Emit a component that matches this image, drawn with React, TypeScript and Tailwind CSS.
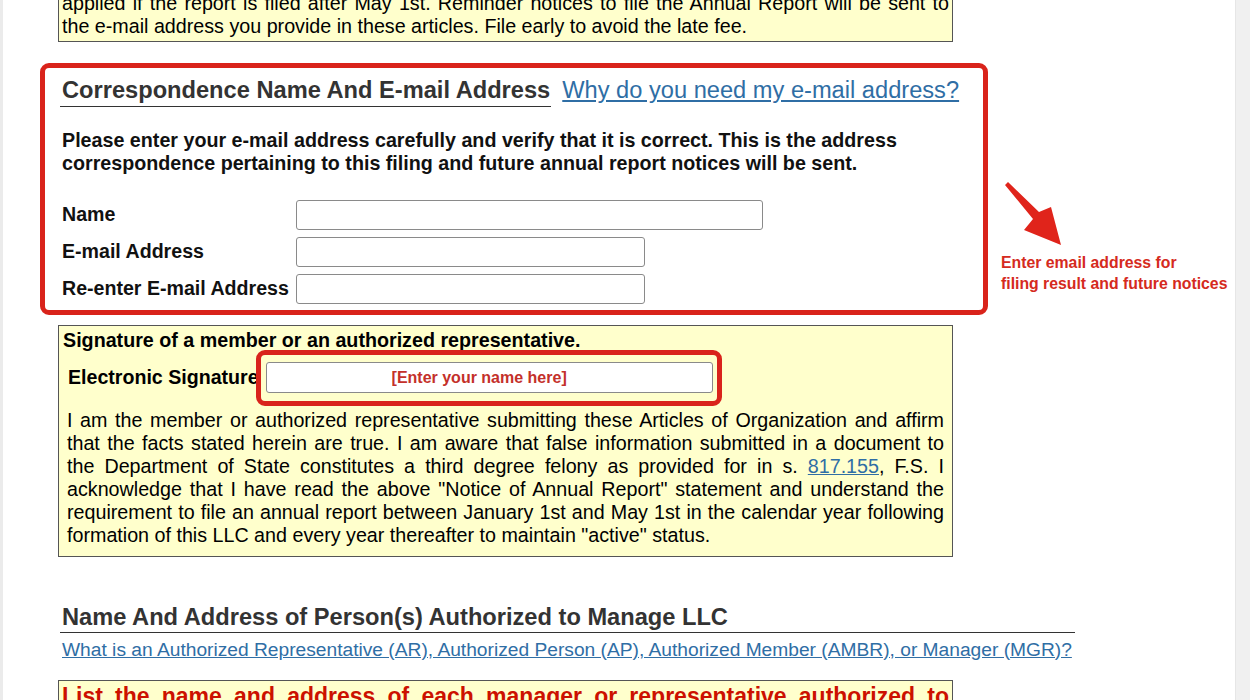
import React from "react";

function JLine({ children, last }: { children: React.ReactNode; last?: boolean }) {
  if (last) return <span className="block">{children}</span>;
  return <span className="block text-justify [text-align-last:justify]">{children}</span>;
}

export default function App() {
  return (
    <div className="flex h-[700px] overflow-hidden bg-white font-['Liberation_Sans',Arial,sans-serif] text-black">
      <div className="w-[3px] shrink-0 bg-[#ebebeb]" />

      <div className="relative flex-1 pl-[37px]">
        {/* annual report notice (scrolled past) */}
        <div className="ml-[18px] mt-[-9px] w-[895px] border border-[#555] bg-[#ffffcc] px-[3px] pb-[3px] text-[19.7px] leading-[23px]">
          <JLine>
            applied if the report is filed after May 1st. Reminder notices to file the Annual Report will be sent to
          </JLine>
          <JLine last>the e-mail address you provide in these articles. File early to avoid the late fee.</JLine>
        </div>

        {/* correspondence block, highlighted */}
        <div className="mt-[21px] box-border h-[252px] w-[948px] rounded-[9px] border-[5px] border-[#d9231b] pl-[15px] pt-[9px]">
          <div className="flex items-start">
            <h2 className="border-b border-[#333] pb-[3px] pl-[2px] pr-[1px] text-[23.65px] font-bold leading-[26px] text-[#333]">
              Correspondence Name And E-mail Address
            </h2>
            <a href="#" className="ml-[11px] text-[23.65px] leading-[26px] text-[#2f6ea5] underline">
              Why do you need my e-mail address?
            </a>
          </div>

          <p className="mt-[22px] pl-[2px] text-[19.7px] font-bold leading-[23px] text-[#111]">
            Please enter your e-mail address carefully and verify that it is correct. This is the address
            <br />
            correspondence pertaining to this filing and future annual report notices will be sent.
          </p>

          <div className="mt-[25px] flex flex-col gap-[7px]">
            <div className="flex items-center">
              <label className="w-[236px] pl-[2px] text-[19.6px] font-bold text-[#111]">Name</label>
              <input className="h-[30px] w-[467px] rounded-[3px] border border-[#8a8a8a] bg-white" />
            </div>
            <div className="flex items-center">
              <label className="w-[236px] pl-[2px] text-[19.6px] font-bold text-[#111]">E-mail Address</label>
              <input className="h-[30px] w-[349px] rounded-[3px] border border-[#8a8a8a] bg-white" />
            </div>
            <div className="flex items-center">
              <label className="w-[236px] pl-[2px] text-[19.6px] font-bold text-[#111]">Re-enter E-mail Address</label>
              <input className="h-[30px] w-[349px] rounded-[3px] border border-[#8a8a8a] bg-white" />
            </div>
          </div>
        </div>

        {/* signature */}
        <div className="ml-[18px] mt-[10px] w-[895px] border border-[#555] bg-[#ffffcc] pb-[9px] pt-[3px]">
          <div className="pl-[4px] text-[19.7px] font-bold leading-[23px]">
            Signature of a member or an authorized representative.
          </div>
          <div className="mt-[-2px] flex items-center pl-[9px]">
            <label className="text-[19.6px] font-bold">Electronic Signature</label>
            <div className="ml-[-3px] box-border h-[56px] w-[466px] rounded-[9px] border-[5px] border-[#d9231b] pl-[5px] pt-[7px]">
              <input
                placeholder="[Enter your name here]"
                className="h-[31px] w-[447px] rounded-[3px] border border-[#8a8a8a] bg-white pl-[125px] text-[16px] font-bold placeholder:text-[#c4302a]"
              />
            </div>
          </div>
          <div className="mt-[2.5px] px-[8px] text-[19.7px] leading-[23px]">
            <JLine>
              I am the member or authorized representative submitting these Articles of Organization and affirm
            </JLine>
            <JLine>
              that the facts stated herein are true. I am aware that false information submitted in a document to
            </JLine>
            <JLine>
              the Department of State constitutes a third degree felony as provided for in s.{" "}
              <a href="#" className="text-[#2f6ea5] underline">
                817.155
              </a>
              , F.S. I
            </JLine>
            <JLine>
              acknowledge that I have read the above "Notice of Annual Report" statement and understand the
            </JLine>
            <JLine>
              requirement to file an annual report between January 1st and May 1st in the calendar year following
            </JLine>
            <JLine last>formation of this LLC and every year thereafter to maintain "active" status.</JLine>
          </div>
        </div>

        {/* managers */}
        <h2 className="ml-[20px] mt-[47px] w-[1015px] border-b border-[#333] pb-[2px] pl-[2px] text-[23.65px] font-bold leading-[26px] text-[#333]">
          Name And Address of Person(s) Authorized to Manage LLC
        </h2>
        <a href="#" className="ml-[22px] mt-[5px] block text-[19.2px] leading-[23px] text-[#2f6ea5] underline">
          What is an Authorized Representative (AR), Authorized Person (AP), Authorized Member (AMBR), or Manager (MGR)?
        </a>

        <div className="ml-[18px] mt-[19px] w-[895px] border border-[#555] bg-[#ffffcc] px-[3px] pt-[2px] text-[23px] font-bold leading-[26px] text-[#cc1100]">
          <JLine>List the name and address of each manager or representative authorized to</JLine>
          <JLine last>manage the affairs of the Limited Liability Company.</JLine>
        </div>

        {/* annotation */}
        <svg className="absolute left-[997px] top-[178px]" width="66" height="74" viewBox="0 0 66 74">
          <polygon points="8,4 39,34 51,29 61,67 24,52 33,41 5,7" fill="#e0241b" />
        </svg>
        <div className="absolute left-[998px] top-[252px] text-[15.8px] font-bold leading-[21px] text-[#d52a20]">
          Enter email address for
          <br />
          filing result and future notices
        </div>
      </div>

      <div className="w-[15px] shrink-0 border-l border-[#e6e6e6] bg-[#f0f0f0]" />
    </div>
  );
}
